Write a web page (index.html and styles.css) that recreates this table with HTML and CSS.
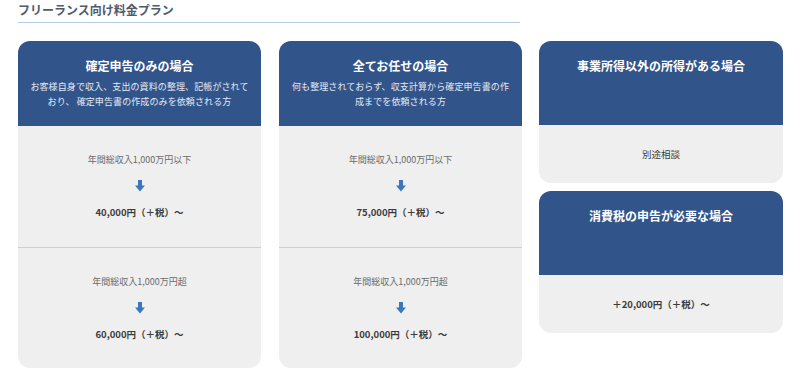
FILE: index.html
```html
<!DOCTYPE html>
<html lang="ja">
<head>
<meta charset="utf-8">
<link rel="stylesheet" href="styles.css">
</head>
<body>
<div class="page">
  <h2 class="title">フリーランス向け料金プラン</h2>
  <div class="grid">
    <div class="card tall">
      <div class="head">
        <div class="h">確定申告のみの場合</div>
        <div class="desc">お客様自身で収入、支出の資料の整理、記帳がされて<br>おり、 確定申告書の作成のみを依頼される方</div>
      </div>
      <div class="seg top">
        <div class="label">年間総収入1,000万円以下</div>
        <svg class="arrow" width="12" height="12" viewBox="0 0 12 12"><rect x="4" y="0" width="4" height="6" fill="#3b77bd"/><path d="M1 5.5 H11 L6 11.5 Z" fill="#3b77bd"/></svg>
        <div class="price">40,000円（＋税）～</div>
      </div>
      <div class="seg">
        <div class="label">年間総収入1,000万円超</div>
        <svg class="arrow" width="12" height="12" viewBox="0 0 12 12"><rect x="4" y="0" width="4" height="6" fill="#3b77bd"/><path d="M1 5.5 H11 L6 11.5 Z" fill="#3b77bd"/></svg>
        <div class="price">60,000円（＋税）～</div>
      </div>
    </div>
    <div class="card tall">
      <div class="head">
        <div class="h">全てお任せの場合</div>
        <div class="desc">何も整理されておらず、収支計算から確定申告書の作<br>成までを依頼される方</div>
      </div>
      <div class="seg top">
        <div class="label">年間総収入1,000万円以下</div>
        <svg class="arrow" width="12" height="12" viewBox="0 0 12 12"><rect x="4" y="0" width="4" height="6" fill="#3b77bd"/><path d="M1 5.5 H11 L6 11.5 Z" fill="#3b77bd"/></svg>
        <div class="price">75,000円（＋税）～</div>
      </div>
      <div class="seg">
        <div class="label">年間総収入1,000万円超</div>
        <svg class="arrow" width="12" height="12" viewBox="0 0 12 12"><rect x="4" y="0" width="4" height="6" fill="#3b77bd"/><path d="M1 5.5 H11 L6 11.5 Z" fill="#3b77bd"/></svg>
        <div class="price">100,000円（＋税）～</div>
      </div>
    </div>
    <div class="col">
      <div class="card small">
        <div class="head">
          <div class="h">事業所得以外の所得がある場合</div>
        </div>
        <div class="seg">
          <div class="plain">別途相談</div>
        </div>
      </div>
      <div class="card small">
        <div class="head">
          <div class="h">消費税の申告が必要な場合</div>
        </div>
        <div class="seg">
          <div class="price">＋20,000円（＋税）～</div>
        </div>
      </div>
    </div>
  </div>
</div>
</body>
</html>
```

FILE: styles.css
```css
* { box-sizing: border-box; }
html, body { margin: 0; padding: 0; background: #fff; }
body {
  font-family: "Noto Sans CJK JP", "Noto Sans", sans-serif;
  color: #333;
}
.page { padding: 0 0 0 18px; }
.title {
  margin: 0;
  width: 502px;
  font-size: 12px;
  font-weight: bold;
  color: #4f5b6b;
  line-height: 18px;
  padding-top: 1px;
  padding-bottom: 3px;
  border-bottom: 1px solid #b4cde4;
}
.grid {
  margin-top: 18px;
  display: grid;
  grid-template-columns: 243px 243px 243px;
  column-gap: 18px;
  align-items: start;
}
.card {
  border-radius: 12px;
  overflow: hidden;
  background: #efefef;
  display: flex;
  flex-direction: column;
}
.tall { height: 327px; }
.col { display: flex; flex-direction: column; gap: 8px; margin-left: -1px; }
.small { height: 142px; }
.head {
  background: #31558b;
  color: #fff;
  text-align: center;
  padding-top: 16px;
  height: 85px;
  flex: none;
}
.small .head { height: 84px; }
.h {
  font-size: 12px;
  font-weight: bold;
  line-height: 18px;
}
.desc {
  margin-top: 4px;
  font-size: 9px;
  line-height: 15px;
  letter-spacing: 0.1px;
  color: #e4e9f2;
}
.seg {
  flex: 1;
  display: flex;
  flex-direction: column;
  align-items: center;
  justify-content: center;
  gap: 14px;
}
.seg.top { border-bottom: 1px solid #c9d0dc; }
.label {
  font-size: 9px;
  line-height: 12px;
  color: #6b6b6b;
}
.arrow { display: block; }
.price {
  font-size: 9.5px;
  line-height: 12px;
  font-weight: bold;
  color: #3c3c3c;
}
.plain {
  font-size: 9.5px;
  line-height: 12px;
  color: #3c3c3c;
}
```
